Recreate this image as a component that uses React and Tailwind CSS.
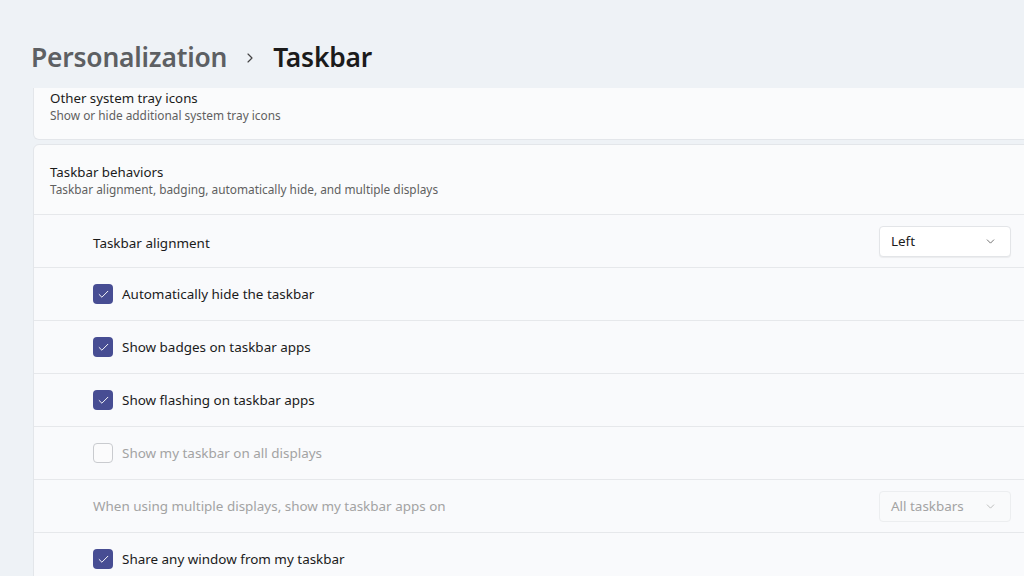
import React from "react";
import { ChevronDown, ChevronRight, Check } from "lucide-react";

const font = { fontFamily: '"Noto Sans", "Open Sans", sans-serif' };

const CheckBox = ({ checked, disabled }) =>
  checked ? (
    <span className="w-5 h-5 rounded-[4px] bg-[#474d93] flex items-center justify-center shrink-0">
      <Check size={13} strokeWidth={1.75} className="text-white" />
    </span>
  ) : (
    <span
      className={`w-5 h-5 rounded-[4px] border shrink-0 ${
        disabled ? "border-[#c9cbcf] bg-[#fbfbfc]" : "border-[#8a8a8a]"
      }`}
    />
  );

const Dropdown = ({ value, disabled }) => (
  <div
    className={`w-[132px] h-[31px] rounded-[4px] border flex items-center justify-between pl-[11px] pr-[13px] text-[13.45px] ${
      disabled
        ? "border-[#eceef0] bg-[#f9fafb] text-[#a3a3a3]"
        : "border-[#e3e5e8] bg-white text-[#1b1b1b] shadow-[0_1px_1px_rgba(0,0,0,0.06)]"
    }`}
  >
    <span>{value}</span>
    <ChevronDown size={13} strokeWidth={1.5} className={disabled ? "text-[#b0b0b0]" : "text-[#555]"} />
  </div>
);

const CheckRow = ({ label, checked, disabled }) => (
  <div className="h-[53px] border-t border-[#e6e8eb] flex items-center pl-[59px] gap-[9px]">
    <CheckBox checked={checked} disabled={disabled} />
    <span className={`text-[13.45px] ${disabled ? "text-[#a3a3a3]" : "text-[#1b1b1b]"}`}>{label}</span>
  </div>
);

const SelectRow = ({ label, value, disabled, lower }) => (
  <div className="h-[53px] border-t border-[#e6e8eb] flex items-center justify-between pl-[59px] pr-[21px]">
    <span
      className={`text-[13.45px] ${lower ? "pt-[4px]" : "pt-[1px]"} ${
        disabled ? "text-[#a3a3a3]" : "text-[#1b1b1b]"
      }`}
    >
      {label}
    </span>
    <Dropdown value={value} disabled={disabled} />
  </div>
);

export default function App() {
  return (
    <div className="w-[1024px] h-[576px] overflow-hidden bg-[#eef2f6] flex flex-col" style={font}>
      {/* Breadcrumb header */}
      <div className="h-[88px] shrink-0 pl-[31px] pt-[37px] flex items-start">
        <div className="flex items-center h-[42px]">
          <span className="text-[26.4px] font-semibold text-[#5d6063] tracking-[-0.2px]">Personalization</span>
          <ChevronRight size={16} strokeWidth={1.75} className="text-[#444] mx-[15px]" />
          <span className="text-[26.4px] font-semibold text-[#1b1b1b] tracking-[-0.2px]">Taskbar</span>
        </div>
      </div>

      <div className="pl-[33px] w-[1033px] flex flex-col gap-[4px]">
        {/* Scrolled card, top clipped */}
        <div className="h-[52px] bg-[#fafbfc] border border-t-0 border-[#e3e6ea] rounded-b-md pl-[16px] pt-[1px] flex flex-col justify-start">
          <span className="text-[13.3px] text-[#1b1b1b] leading-[18px]">Other system tray icons</span>
          <span className="text-[11.85px] text-[#5f5f5f] leading-[16px]">Show or hide additional system tray icons</span>
        </div>

        <div className="bg-[#fafbfc] border border-[#e3e6ea] rounded-md">
          <div className="h-[69px] pl-[16px] flex flex-col justify-center">
            <span className="text-[13.3px] text-[#1b1b1b] leading-[18px]">Taskbar behaviors</span>
            <span className="text-[11.85px] text-[#5f5f5f] leading-[16px]">
              Taskbar alignment, badging, automatically hide, and multiple displays
            </span>
          </div>
          <div className="bg-[#f9fafc]">
            <SelectRow label="Taskbar alignment" value="Left" lower />
            <CheckRow label="Automatically hide the taskbar" checked />
            <CheckRow label="Show badges on taskbar apps" checked />
            <CheckRow label="Show flashing on taskbar apps" checked />
            <CheckRow label="Show my taskbar on all displays" disabled />
            <SelectRow label="When using multiple displays, show my taskbar apps on" value="All taskbars" disabled />
            <CheckRow label="Share any window from my taskbar" checked />
          </div>
        </div>
      </div>
    </div>
  );
}
